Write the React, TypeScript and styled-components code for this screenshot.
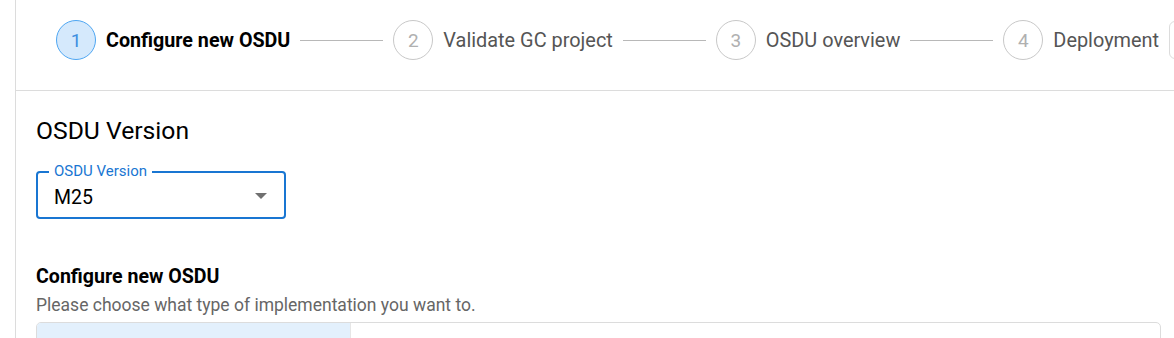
import React from "react";
import styled, { createGlobalStyle } from "styled-components";

const Global = createGlobalStyle`
  html, body { margin: 0; padding: 0; background: #fff; }
  body { font-family: Roboto, "Liberation Sans", sans-serif; overflow: hidden; }
  * { box-sizing: border-box; }
`;

const Page = styled.div`
  margin-left: 15px;
  border-left: 1px solid #dcdcdc;
  height: 338px;
  overflow: hidden;
`;

const StepBar = styled.div`
  height: 91px;
  border-bottom: 1px solid #dcdcdc;
  display: flex;
  align-items: flex-start;
  padding: 20px 0 0 40px;
  white-space: nowrap;
  overflow: hidden;
`;

const Step = styled.div`
  display: flex;
  align-items: center;
  gap: 10px;
  flex: none;
`;

const Circle = styled.div<{ $active?: boolean }>`
  width: 40px;
  height: 40px;
  border-radius: 50%;
  border: 1px solid ${(p) => (p.$active ? "#4ea6f2" : "#c8c8c8")};
  background: ${(p) => (p.$active ? "#d5e9fc" : "#fff")};
  color: ${(p) => (p.$active ? "#3d8fe0" : "#b0b0b0")};
  font-size: 19px;
  display: flex;
  align-items: center;
  justify-content: center;
`;

const StepLabel = styled.span<{ $active?: boolean }>`
  font-size: ${(p) => (p.$active ? "19.7px" : "19.9px")};
  font-weight: ${(p) => (p.$active ? 700 : 400)};
  color: ${(p) => (p.$active ? "#000" : "#555")};
`;

const Connector = styled.div`
  flex: none;
  width: 83px;
  height: 1px;
  background: #b8b8b8;
  margin: 20px 10px 0 10px;
`;

const Trailing = styled.div`
  flex: none;
  width: 40px;
  height: 38px;
  margin: 1px 0 0 10px;
  border: 1px solid #dcdcdc;
  border-radius: 6px;
`;

const Content = styled.div`
  padding: 25px 0 0 20px;
`;

const SectionTitle = styled.h2`
  margin: 0;
  font-size: 24.7px;
  font-weight: 400;
  color: #000;
  line-height: 30px;
`;

const Field = styled.div`
  position: relative;
  margin-top: 25px;
  width: 250px;
  height: 48px;
  border: 2px solid #1976d2;
  border-radius: 4px;
  display: flex;
  align-items: center;
  padding: 0 16px;
`;

const FieldLabel = styled.span`
  position: absolute;
  top: -10px;
  left: 11px;
  padding: 0 5px;
  background: #fff;
  font-size: 15px;
  line-height: 16px;
  color: #1976d2;
`;

const FieldValue = styled.span`
  flex: 1;
  font-size: 19.5px;
  color: #000;
  padding-top: 4px;
`;

const Arrow = styled.span`
  width: 0;
  height: 0;
  border-left: 6px solid transparent;
  border-right: 6px solid transparent;
  border-top: 6px solid #707070;
  margin-top: 2px;
  margin-right: 1px;
`;

const SubTitle = styled.h3`
  margin: 46px 0 0 0;
  font-size: 19.6px;
  font-weight: 700;
  color: #000;
  line-height: 24px;
`;

const Help = styled.p`
  margin: 4px 0 0 0;
  font-size: 17.5px;
  color: #666;
  line-height: 24px;
`;

const Options = styled.div`
  margin-top: 5px;
  width: 1125px;
  height: 40px;
  border: 1px solid #dcdcdc;
  border-radius: 5px;
  display: flex;
  overflow: hidden;
`;

const Option = styled.div<{ $selected?: boolean }>`
  width: 314px;
  background: ${(p) => (p.$selected ? "#e3f0fc" : "#fff")};
  border-right: 1px solid #e6e6e6;
`;

const steps = ["Configure new OSDU", "Validate GC project", "OSDU overview", "Deployment"];

export default function App() {
  return (
    <>
      <Global />
      <Page>
        <StepBar>
          {steps.map((s, i) => (
            <React.Fragment key={s}>
              {i > 0 && <Connector />}
              <Step>
                <Circle $active={i === 0}>{i + 1}</Circle>
                <StepLabel $active={i === 0}>{s}</StepLabel>
              </Step>
            </React.Fragment>
          ))}
          <Trailing />
        </StepBar>
        <Content>
          <SectionTitle>OSDU Version</SectionTitle>
          <Field>
            <FieldLabel>OSDU Version</FieldLabel>
            <FieldValue>M25</FieldValue>
            <Arrow />
          </Field>
          <SubTitle>Configure new OSDU</SubTitle>
          <Help>Please choose what type of implementation you want to.</Help>
          <Options>
            <Option $selected />
          </Options>
        </Content>
      </Page>
    </>
  );
}
